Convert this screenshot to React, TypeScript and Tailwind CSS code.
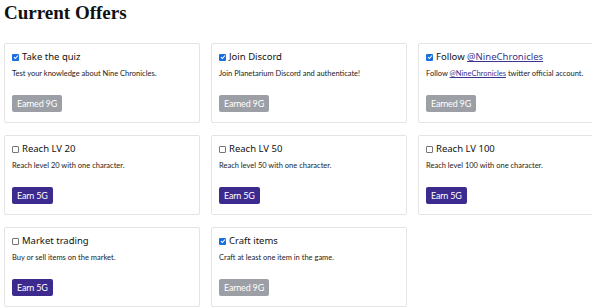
import React from "react";

type Offer = {
  title: React.ReactNode;
  desc: React.ReactNode;
  done: boolean;
  reward: string;
};

const Link = ({ children }: { children: React.ReactNode }) => (
  <span className="text-[#3b3590] underline">{children}</span>
);

const offers: Offer[] = [
  { title: "Take the quiz", desc: "Test your knowledge about Nine Chronicles.", done: true, reward: "9G" },
  { title: "Join Discord", desc: "Join Planetarium Discord and authenticate!", done: true, reward: "9G" },
  {
    title: (
      <>
        Follow <Link>@NineChronicles</Link>
      </>
    ),
    desc: (
      <>
        Follow <Link>@NineChronicles</Link> twitter official account.
      </>
    ),
    done: true,
    reward: "9G",
  },
  { title: "Reach LV 20", desc: "Reach level 20 with one character.", done: false, reward: "5G" },
  { title: "Reach LV 50", desc: "Reach level 50 with one character.", done: false, reward: "5G" },
  { title: "Reach LV 100", desc: "Reach level 100 with one character.", done: false, reward: "5G" },
  { title: "Market trading", desc: "Buy or sell items on the market.", done: false, reward: "5G" },
  { title: "Craft items", desc: "Craft at least one item in the game.", done: true, reward: "9G" },
];

const Check = ({ on }: { on: boolean }) =>
  on ? (
    <span className="inline-flex w-[7px] h-[7px] rounded-[1px] bg-[#1a6fe0] items-center justify-center shrink-0">
      <svg width="6" height="6" viewBox="0 0 6 6">
        <path d="M1 3.2 L2.4 4.5 L5 1.5" stroke="white" strokeWidth="1.1" fill="none" />
      </svg>
    </span>
  ) : (
    <span className="inline-block w-[7px] h-[7px] rounded-[1px] border border-[#767676] bg-white shrink-0" />
  );

export default function App() {
  return (
    <div className="w-[592px] h-[308px] overflow-hidden bg-white">
      <div className="pl-[4px]">
        <h1
          className="text-[19px] leading-[24px] font-bold text-[#111] pt-[1px]"
          style={{ fontFamily: '"Liberation Serif", serif' }}
        >
          Current Offers
        </h1>
        <div className="grid grid-cols-[196px_196px_196px] gap-x-[11px] gap-y-[12px] mt-[18px] w-[620px]">
          {offers.map((o, i) => (
            <div
              key={i}
              className="h-[80px] border border-[#e4e4e4] rounded-[2px] flex flex-col px-[7px] pt-[6px] pb-[9px] bg-white"
            >
              <div
                className="flex items-center gap-[3px] text-[9.5px] leading-[14px] text-[#111]"
                style={{ fontFamily: '"Noto Sans", sans-serif' }}
              >
                <Check on={o.done} />
                <span>{o.title}</span>
              </div>
              <div
                className="text-[7.5px] leading-[12px] text-[#222] mt-[4px]"
                style={{ fontFamily: "Lato, sans-serif" }}
              >
                {o.desc}
              </div>
              <div className="mt-auto">
                <span
                  className={
                    "inline-flex items-center h-[17px] px-[5px] rounded-[2px] text-[9px] tracking-[-0.2px] text-white " +
                    (o.done ? "bg-[#9ca0a6]" : "bg-[#3d2a8f]")
                  }
                  style={{ fontFamily: "Lato, sans-serif" }}
                >
                  {o.done ? "Earned " + o.reward : "Earn " + o.reward}
                </span>
              </div>
            </div>
          ))}
        </div>
      </div>
    </div>
  );
}
